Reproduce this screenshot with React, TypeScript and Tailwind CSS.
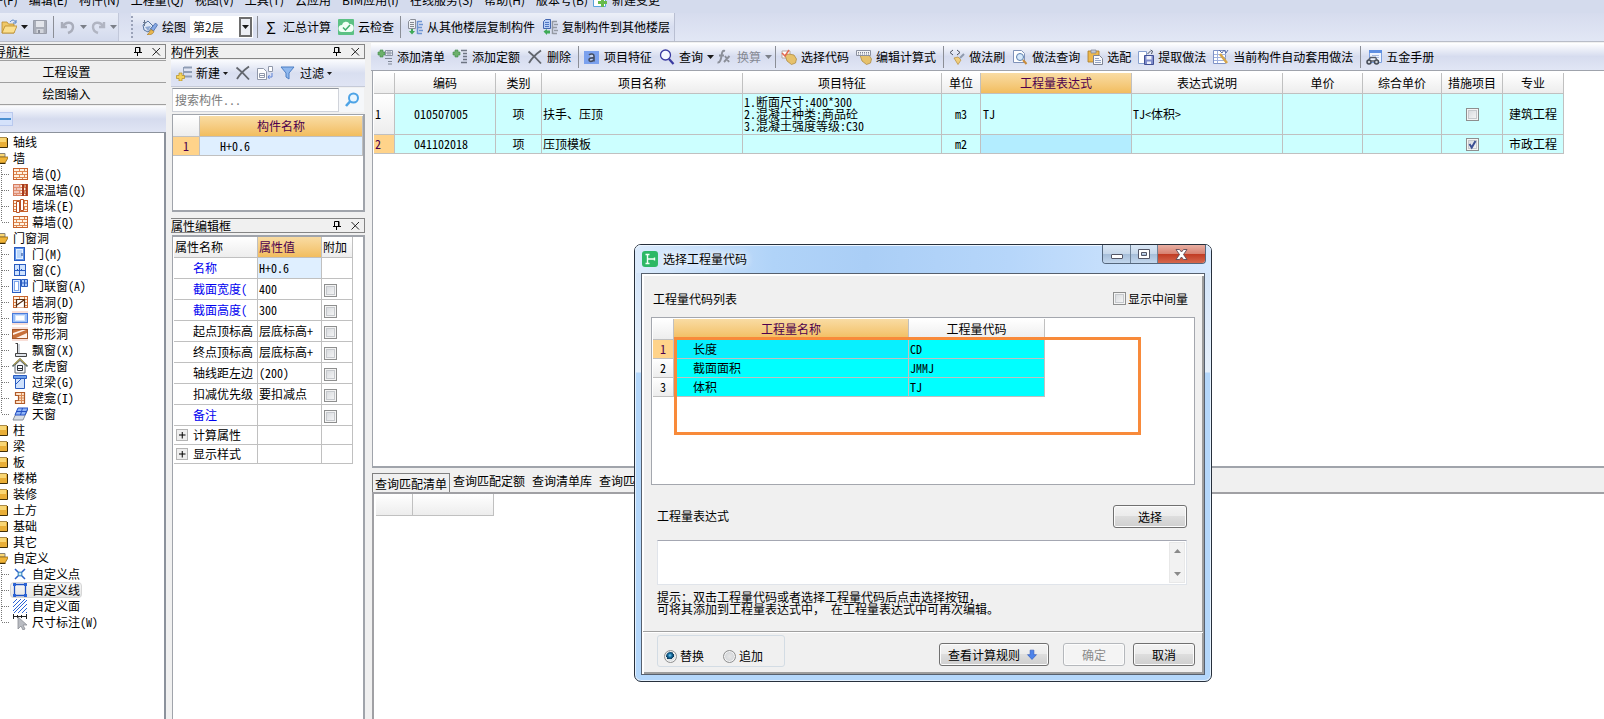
import { useState } from 'react'
import type { ReactNode } from 'react'
import clsx from 'clsx'

const bricks = (
  <>
    <rect x="1.5" y="2.5" width="14" height="11" fill="#fff3e2" stroke="#c8632c" />
    <path d="M2 5.500h13M2 8.500h13M2 11.500h13M7.500 3v2M12.500 3v2M4.500 6v2M10.500 6v2M7.500 9v2M12.500 9v2M4.500 12v1M10.500 12v1" stroke="#dd8650" fill="none" />
  </>
)

const hand = <path d="M4 6l4-1 5 1 2.500 4-1 4-4 1.500L6 12z" fill="#e6c16c" stroke="#a9853a" strokeWidth=".7" />

const plus = <path d="M3 1h3v2h2v3H6v2H3V6H1V3h2z" fill="#6cb06c" stroke="#3f8a4a" strokeWidth=".6" />

const icons: Record<string, ReactNode> = {
  open: (
    <>
      <path d="M1 3h5l1.500 2H13v9H1z" fill="#f0c868" stroke="#b98a2c" strokeWidth=".8" />
      <path d="M1 14l3-7h12l-3 7z" fill="#fbdf8e" stroke="#b98a2c" strokeWidth=".8" />
      <path d="M9 3c2-2.500 4-2.500 5.500 0M15 1v3h-3" fill="none" stroke="#4f7fc0" />
    </>
  ),
  save: (
    <>
      <path d="M1.500 1.500h13v13h-13z" fill="#a9adb8" stroke="#989ca8" />
      <path d="M4 2h8v6H4z" fill="#e3e5eb" />
      <path d="M4.500 10h7v4h-7z" fill="#d2d5dd" />
      <path d="M6 11h2v3H6z" fill="#8b8f9b" />
    </>
  ),
  undo: <path d="M2 3v5h5M3 7c3-5 10-4 10 1 0 3-2 5-5 6" fill="none" stroke="#a9adba" strokeWidth="2.400" />,
  redo: <path d="M14 3v5H9M13 7C10 2 3 3 3 8c0 3 2 5 5 6" fill="none" stroke="#b1b5c2" strokeWidth="2.400" />,
  draw: (
    <>
      <path d="M1 6l5-4 5 5-5 6-4-2z" fill="#dfe8f6" stroke="#56749f" />
      <path d="M2.500 1v6M1 3.500h3" stroke="#6b7a90" />
      <path d="M3 8l6-1-3 5z" fill="#8fa9d2" />
      <path d="M13.500 4L15.500 6l-4 6-3-2z" fill="#86a8e6" stroke="#3b5f9f" strokeWidth=".7" />
      <path d="M5 15.500c2 0 2-3 4-5l3 2c-1 3-5 4-7 3z" fill="#e9b64e" stroke="#9c7426" strokeWidth=".6" />
    </>
  ),
  cloud: (
    <>
      <rect width="16" height="16" rx="1" fill="#5cc184" />
      <path d="M4 13a3.500 3.500 0 010-7 4 4 0 017.500-1A4 4 0 0112 13z" fill="#f2fff6" />
      <path d="M5 8.500L7.500 11 12 6" fill="none" stroke="#3fae6c" strokeWidth="1.500" />
    </>
  ),
  copyFrom: (
    <>
      <path d="M1.500 2.500l2-2h5v9h-7z" fill="#eceff4" stroke="#8b8f99" />
      <path d="M3 3.500h4M3 5.500h4M3 7.500h4" stroke="#84888f" />
      <path d="M10.500 2v13M10.500 2.500H15M12 5.500h4M10.500 8.500H15M12 11.500h4M10.500 14.500H15" stroke="#6f95d2" strokeWidth="1.500" fill="none" />
      <path d="M4 10v2H2l3 3.500L8 12H6v-2z" fill="#3faa57" />
    </>
  ),
  copyTo: (
    <>
      <path d="M1.500 2.500l2-2h5v9h-7z" fill="#b9cff6" stroke="#4467b0" />
      <path d="M3 3.500h4M3 5.500h4M3 7.500h4" stroke="#4f76c4" />
      <path d="M10.500 2v13M10.500 2.500H15M12 5.500h4M10.500 8.500H15M12 11.500h4M10.500 14.500H15" stroke="#9499a3" strokeWidth="1.500" fill="none" />
      <path d="M1.500 12.500L5 10v1.500h3v3H5V16z" fill="#3faa57" />
    </>
  ),
  change: (
    <>
      <path d="M1.500 1.500h9l3 3v10h-12z" fill="#fff" stroke="#58a2dd" />
      <path d="M9 6h3v3h3v3h-3v3H9v-3H6V9h3z" fill="#67bb4b" />
    </>
  ),
  addList: (
    <>
      {plus}
      <path d="M8.500 1.500h7v5h-7z" fill="#eef1f6" stroke="#8a93a5" />
      <path d="M9 4h6M11 2v4M13 2v4" stroke="#8a93a5" />
      <path d="M8 9.500h7M11 12.500h4M11 15h4" stroke="#7f8796" />
    </>
  ),
  addQuota: (
    <>
      {plus}
      <path d="M9 1.500h6M11 4.500h4M11 7.500h4M11 10.500h4M9 13.500h6" stroke="#6d7482" strokeWidth="1.400" fill="none" />
    </>
  ),
  remove: <path d="M1.500 2.500C6 6 10 10 14 14.500M14 1.500C9 5 5 9 2 14" fill="none" stroke="#62666d" strokeWidth="1.800" />,
  feature: (
    <>
      <rect y="2" width="15" height="13" fill="#7ba1ee" />
      <path d="M5 6c1.500-1.500 5-1.500 5 1v5.500M10 9c-3.500-.5-5 .3-5 2s3 2 5 0" fill="#c4d2ef" stroke="#434c60" strokeWidth="1.600" />
    </>
  ),
  search: (
    <>
      <circle cx="6.500" cy="6" r="5" fill="#f5f8ff" stroke="#3a3aa0" strokeWidth="1.300" />
      <path d="M10 10l4.500 5" stroke="#3a3aa0" strokeWidth="2.200" />
    </>
  ),
  fx: (
    <path d="M8 2C5 1 5 4 4.500 7S3 14 .5 13.500M2 6.500h5M8 7l4 6M12.500 7L7 13" fill="none" stroke="#8b8f99" strokeWidth="1.900" />
  ),
  pickCode: (
    <>
      <path d="M1 2h8v7H1z" fill="#fff" stroke="#b7a7a0" />
      {hand}
      <path d="M1 4l3 3 4-6" fill="none" stroke="#e2684e" strokeWidth="1.500" />
    </>
  ),
  editExpr: (
    <>
      {hand}
      <path d="M.5 1.500h14v5H.5z" fill="#f2f3f6" stroke="#8b90a0" />
      <path d="M2 3.500h11M2 5h11" stroke="#7d8394" strokeDasharray="1 1" />
    </>
  ),
  brush: (
    <>
      <path d="M4 1L1 3.500 4 6M8 1l3 2.500L8 6" fill="none" stroke="#4a4f5c" />
      <path d="M15 5l-4 4" stroke="#8f9aae" strokeWidth="2" />
      <path d="M5 9l4-1 3 3-3 4.500z" fill="#f0cd7c" stroke="#b68d3a" strokeWidth=".7" />
    </>
  ),
  pageSearch: (
    <>
      <path d="M1.500 1.500h8l3 3v9h-11z" fill="#fff" stroke="#7f92b8" />
      <circle cx="8" cy="8" r="3.500" fill="#d6e9fb" stroke="#5c7fae" />
      <path d="M11 11l3.500 4" stroke="#c98c3c" strokeWidth="2" />
    </>
  ),
  paste: (
    <>
      <path d="M1 2h11v11H1z" fill="#edb84e" stroke="#a87a25" strokeWidth=".8" />
      <path d="M4 1h5v3H4z" fill="#c5c9d2" stroke="#7d8292" strokeWidth=".7" />
      <path d="M6.500 6.500h6l3 3v6h-9z" fill="#f8f9fc" stroke="#7d8292" />
      <path d="M8 9.500h4M8 11.500h6M8 13.500h6" stroke="#93a3c4" />
    </>
  ),
  extract: (
    <>
      <path d="M.5 2.500h8v12h-8z" fill="#fff" stroke="#87a0cf" />
      <path d="M6.500 6.500h9v9h-9z" fill="#7f8ccb" stroke="#414f94" />
      <path d="M8.500 7h5v3.500h-5zM9 12.500h4V15H9z" fill="#eef0fb" />
      <path d="M9.500 5l3-3M12.500 1l2 1-1 3" fill="none" stroke="#4c5568" />
    </>
  ),
  auto: (
    <>
      <path d="M.5 1.500h12v13H.5z" fill="#fff" stroke="#7e92c6" />
      <path d="M1 5.500h12M1 8.500h12M1 11.500h12M4.500 2v12" stroke="#9fb1de" />
      <path d="M7 5l7 9" stroke="#d6a548" strokeWidth="2.500" />
      <path d="M6 1l3 3 2-3 2 3 2-3" fill="none" stroke="#5a6ea8" />
    </>
  ),
  manual: (
    <>
      <path d="M3.500 1.500h12v12h-12z" fill="#eef4ff" stroke="#7ba0e0" />
      <path d="M3 1h13v3H3z" fill="#5e8fe2" />
      <path d="M6 6.500h7M6 8.500h7" stroke="#a8bce2" />
      <circle cx="3" cy="13" r="2" fill="#ccd1d8" stroke="#444a55" strokeWidth="1.500" />
      <circle cx="10.500" cy="13" r="2" fill="#ccd1d8" stroke="#444a55" strokeWidth="1.500" />
      <path d="M2.500 11l2-2.500h5l1.500 2.500M5 12h3" fill="none" stroke="#555c68" strokeWidth="1.400" />
    </>
  ),
  create: (
    <>
      <path d="M8 2.500h8M8 7h8M8 11.500h8" stroke="#8f9db5" strokeWidth="2" />
      <path d="M7.500 2v10" stroke="#8f9db5" />
      <path d="M3 8h3v2.500h2.500v3H6V16H3v-2.500H.5v-3H3z" fill="#f4d35c" stroke="#b38d22" strokeWidth=".7" />
    </>
  ),
  duplicate: (
    <>
      <path d="M.5 3.500h6l3 3v8h-9z" fill="#fff" stroke="#9098aa" />
      <path d="M2.500 8.500h5v4h-5zM2.500 10.500h5" stroke="#9098aa" />
      <path d="M11.500 1.500h4v5h-4z" fill="#fff" stroke="#9098aa" />
      <path d="M15 8v4h-4M12.500 10L11 12l1.500 2" fill="none" stroke="#5f83d6" />
    </>
  ),
  filter: <path d="M1 2h13l-5 6v6l-3-2V8z" fill="#8fb8ee" stroke="#4d7fc4" />,
  find: (
    <>
      <circle cx="9.500" cy="6" r="4.500" fill="#e8f5ff" stroke="#4da3e6" strokeWidth="2" />
      <path d="M6 9.500L2 14" stroke="#4da3e6" strokeWidth="2.600" />
    </>
  ),
  folder: (
    <>
      <path d="M1 3h14v10H1z" fill="#e9ae36" />
      <path d="M1 4h13v4H1z" fill="#f9d673" />
      <path d="M1 3.500h14" stroke="#a98a48" />
      <path d="M1 13.500h14.500V4" stroke="#3f2e08" fill="none" />
    </>
  ),
  folderOpen: (
    <>
      <path d="M1 3.500h12V7H1z" fill="#f9d673" stroke="#8a8477" />
      <path d="M1 13l3-6h12.500L13 13z" fill="#f0b437" stroke="#8c6614" strokeWidth=".8" />
      <path d="M1 13.500h12.500" stroke="#3d2c05" />
    </>
  ),
  wall: bricks,
  warmWall: (
    <>
      {bricks}
      <path d="M10 2h2v12h-2zM13.500 2h2v12h-2z" fill="#a63a22" />
      <path d="M1 2h8v12H1z" fill="#e39a94" opacity=".5" />
    </>
  ),
  pier: (
    <>
      {bricks}
      <path d="M4.500 3.500h3v11h-3zM8.500 1.500h3v11h-3z" fill="#fff" stroke="#b94f20" />
    </>
  ),
  door: (
    <>
      <rect x="2.500" y="1.500" width="10" height="13" fill="#5c93e8" stroke="#2a5cc0" />
      <rect x="4.500" y="3.500" width="6" height="9" fill="#b9d6fb" stroke="#e6f0ff" />
      <path d="M10 7v3" stroke="#163a8a" />
    </>
  ),
  window: (
    <>
      <rect x="2.500" y="2.500" width="11" height="11" fill="#cfe3ff" stroke="#2a5cc0" />
      <path d="M7.500 3v10M3 8.500h10M5.500 7v1M9.500 7v1" stroke="#2a5cc0" />
    </>
  ),
  doorWindow: (
    <>
      <rect x=".5" y="1.500" width="8" height="13" fill="#dbe9ff" stroke="#2a5cc0" />
      <rect x="2.500" y="3.500" width="4" height="9" fill="#fff" stroke="#7ea6ec" />
      <path d="M9.500 1.500h6v7h-6zM12.500 1v8M9 5h7" fill="#a9c8fa" stroke="#2a5cc0" />
    </>
  ),
  hole: (
    <>
      {bricks}
      <path d="M4.500 13.500v-8h8v8M5 11l7-5" fill="#fff" stroke="#5a2e12" strokeWidth="1.200" />
    </>
  ),
  stripWindow: (
    <>
      <rect y="1" width="16" height="14" fill="#f9dfd8" />
      <rect x=".5" y="3.500" width="15" height="9" fill="#9cc0f8" stroke="#4b7cda" />
      <rect x="3.500" y="5.500" width="9" height="5" fill="#fff" stroke="#d4e4fd" />
    </>
  ),
  stripHole: (
    <>
      <rect y="1" width="16" height="14" fill="#f9dfd8" />
      <rect x=".5" y="3.500" width="15" height="9" fill="#c8713b" stroke="#a4582a" />
      <path d="M1 7l9-3h4L1 9zM4 12l11-5v5z" fill="#fff3ea" />
    </>
  ),
  bay: (
    <>
      <path d="M5.500 1.500h-2M5.500 1v11h-2" fill="none" stroke="#444" />
      <path d="M6 2h2v9H6z" fill="#d2d6dc" />
      <path d="M3.500 11.500h11v3h-11z" fill="#dfe3e9" stroke="#444" />
    </>
  ),
  dormer: (
    <>
      <path d="M3 7v8h10V7L8 2.500z" fill="#f7f8fa" stroke="#5f6670" />
      <path d="M.5 8.500L8 1l7.500 7.500" fill="none" stroke="#5c6b62" strokeWidth="1.600" />
      <path d="M2 6.500L8 .8l6 5.700" fill="none" stroke="#e3b93c" strokeWidth=".9" />
      <path d="M5.500 7.500h5v5h-5zM5 10.500h6" fill="none" stroke="#31363d" />
    </>
  ),
  lintel: (
    <>
      <path d="M1.500 1.500h13v3h-13z" fill="#6fa0ec" stroke="#2a5cc0" />
      <path d="M3.500 4.500h9v10h-9z" fill="#cfe1fc" stroke="#2a5cc0" />
      <path d="M4 10l5-5" stroke="#2a5cc0" />
    </>
  ),
  niche: (
    <>
      <path d="M3.500 2.500h9v11h-9v-3h3v-5h-3z" fill="#ffe3c9" stroke="#b05a28" strokeWidth="1.200" />
      <path d="M7 5.500h5M7 8h5M7 10.500h5M9.500 3v10" stroke="#d88a54" />
    </>
  ),
  skylight: (
    <>
      <path d="M1 14L6 3h10l-5 11z" fill="#d8dde4" stroke="#868e99" />
      <path d="M3 9l3-7h10l-3 7z" fill="#8fb4f6" stroke="#2450c4" />
      <path d="M4.500 5.500h10M10.500 2l-2 7" stroke="#2450c4" />
    </>
  ),
  point: (
    <>
      <path d="M3 3l10 10M13 3L3 13" stroke="#2d62c8" strokeWidth="1.500" />
      <circle cx="8" cy="8" r="2" fill="#cfe6ff" stroke="#2b86b8" />
    </>
  ),
  line: (
    <>
      <path d="M2.500 2.500h11v11h-11z" fill="none" stroke="#1c51c4" strokeWidth="1.300" />
      <path d="M1 1h3v3H1zM12 1h3v3h-3zM1 12h3v3H1zM12 12h3v3h-3z" fill="#2a63d6" />
    </>
  ),
  face: <path d="M1 5l4-4M1 9l8-8M1 13l12-12M2 15L15 2M6 15l9-9M10 15l5-5M14 15l1-1" stroke="#2a63d6" fill="none" />,
  dimension: (
    <>
      <path d="M1.500 0v5M14.500 0v5M1 2.500h14M5.500 1v3M9.500 1v3" stroke="#222" />
      <path d="M6 3l9 8h-4l2 4-2 1-2-4-3 3z" fill="#b9bcc2" stroke="#8a8d94" strokeWidth=".8" />
    </>
  ),
  down: (
    <path d="M5.500 1.500h5v6h3.500L8 14 2 7.500h3.500z" fill="#4d83ea" stroke="#2854b8" strokeWidth=".8" />
  ),
}

const Icon = ({ name, className }: { name: string; className?: string }) => (
  <svg width="16" height="16" viewBox="0 0 16 16" fill="none" aria-hidden="true" className={clsx('shrink-0', className)}>
    {icons[name]}
  </svg>
)

const Caret = ({ muted, small }: { muted?: boolean; small?: boolean }) => (
  <svg
    width={small ? 5 : 7}
    height={small ? 3 : 4}
    viewBox="0 0 7 4"
    aria-hidden="true"
    className={clsx('shrink-0', muted ? 'fill-[#7b7f88]' : 'fill-[#1a1a1a]')}
  >
    <path d="M0 0h7L3.500 4z" />
  </svg>
)

const menus = ['文件(F)', '编辑(E)', '构件(N)', '工程量(Q)', '视图(V)', '工具(T)', '云应用', 'BIM应用(I)', '在线服务(S)', '帮助(H)', '版本号(B)']

const MenuBar = () => (
  <nav className="flex h-[13px] items-end overflow-hidden bg-[#d4dbed] pb-[6px] leading-[14px]">
    <div className="-ml-[21px] flex shrink-0 items-end gap-[11px] whitespace-nowrap">
      {menus.map((menu) => (
        <button key={menu} type="button">{menu}</button>
      ))}
    </div>
    <button type="button" className="ml-1 flex h-[14px] shrink-0 items-center gap-1 whitespace-nowrap">
      <Icon name="change" />
      新建变更
    </button>
  </nav>
)

const ToolbarRule = ({ className }: { className?: string }) => (
  <span className={clsx('h-[22px] w-px shrink-0 bg-[#8b8e96]', className)} />
)

const MainToolbar = () => (
  <div className="flex h-[29px] items-stretch overflow-hidden whitespace-nowrap border-b border-[#b9bdc8] bg-linear-to-b from-[#d6dcee] to-[#e2e7f5]">
    <div className="flex w-[119px] shrink-0 items-center border-r border-[#c2c8da] bg-linear-to-b from-[#e9edf7] to-[#d3daed] pl-px">
      <button type="button" aria-label="打开" className="flex items-center gap-1"><Icon name="open" /><Caret /></button>
      <button type="button" aria-label="保存" className="ml-1"><Icon name="save" /></button>
      <ToolbarRule className="ml-[5px]" />
      <button type="button" aria-label="撤销" className="ml-[6px] flex items-center gap-1"><Icon name="undo" /><Caret muted /></button>
      <button type="button" aria-label="恢复" className="ml-[3px] flex items-center gap-1"><Icon name="redo" /><Caret muted /></button>
    </div>
    <div className="ml-3 flex shrink-0 items-center border-r border-[#b9bfd2] bg-linear-to-b from-[#edf0f8] via-[#d8def0] to-[#dfe4f3] pr-1">
      <span className="mr-2 h-[22px] w-[3px] border-l-2 border-dotted border-[#9aa2b8]" />
      <button type="button" className="flex items-center gap-1"><Icon name="draw" />绘图</button>
      <div className="relative ml-1 h-[22px] w-[63px]">
        <select aria-label="楼层" className="h-full w-full appearance-none bg-white pl-[3px] leading-[22px] text-[#111]">
          <option>第2层</option>
        </select>
        <span className="pointer-events-none absolute inset-y-px right-px flex w-[13px] items-center justify-center border-2 border-[#6d6d6d] bg-[#eceef4]">
          <Caret />
        </span>
      </div>
      <ToolbarRule className="ml-1" />
      <button type="button" className="ml-2 flex items-center gap-[7px]">
        <span className="w-[10px] text-base leading-4">Σ</span>
        汇总计算
      </button>
      <button type="button" className="ml-[7px] flex items-center gap-1"><Icon name="cloud" />云检查</button>
      <ToolbarRule className="ml-[6px]" />
      <button type="button" className="ml-[6px] flex items-center gap-1"><Icon name="copyFrom" />从其他楼层复制构件</button>
      <button type="button" className="ml-[7px] flex items-center gap-1"><Icon name="copyTo" />复制构件到其他楼层</button>
    </div>
  </div>
)

const PanelTitle = ({ children, shifted }: { children: string; shifted?: boolean }) => (
  <div className="flex h-[15px] shrink-0 items-center justify-between overflow-hidden border border-l-0 border-[#858585] pr-1 leading-[13px]">
    <h2 className={clsx(shifted && '-ml-[6px]')}>{children}</h2>
    <div className="flex items-center gap-[10px]">
      <button type="button" aria-label="固定">
        <svg width="8" height="9" viewBox="0 0 8 9" fill="none" stroke="#000" aria-hidden="true">
          <path d="M1.500 5V.5H6V5M5.500 1v4M0 5.500h8M3.500 6v3" />
        </svg>
      </button>
      <button type="button" aria-label="关闭">
        <svg width="9" height="9" viewBox="0 0 9 9" stroke="#222" aria-hidden="true">
          <path d="M.5 1l7.500 7.500M8 1L.5 8.500" />
        </svg>
      </button>
    </div>
  </div>
)

type TreeNode = { label: string; icon?: string; children?: TreeNode[] }

const tree: TreeNode[] = [
  { label: '轴线' },
  {
    label: '墙',
    children: [
      { label: '墙(Q)', icon: 'wall' },
      { label: '保温墙(Q)', icon: 'warmWall' },
      { label: '墙垛(E)', icon: 'pier' },
      { label: '幕墙(Q)', icon: 'wall' },
    ],
  },
  {
    label: '门窗洞',
    children: [
      { label: '门(M)', icon: 'door' },
      { label: '窗(C)', icon: 'window' },
      { label: '门联窗(A)', icon: 'doorWindow' },
      { label: '墙洞(D)', icon: 'hole' },
      { label: '带形窗', icon: 'stripWindow' },
      { label: '带形洞', icon: 'stripHole' },
      { label: '飘窗(X)', icon: 'bay' },
      { label: '老虎窗', icon: 'dormer' },
      { label: '过梁(G)', icon: 'lintel' },
      { label: '壁龛(I)', icon: 'niche' },
      { label: '天窗', icon: 'skylight' },
    ],
  },
  { label: '柱' },
  { label: '梁' },
  { label: '板' },
  { label: '楼梯' },
  { label: '装修' },
  { label: '土方' },
  { label: '基础' },
  { label: '其它' },
  {
    label: '自定义',
    children: [
      { label: '自定义点', icon: 'point' },
      { label: '自定义线', icon: 'line' },
      { label: '自定义面', icon: 'face' },
      { label: '尺寸标注(W)', icon: 'dimension' },
    ],
  },
]

const TreeBranch = ({ last }: { last: boolean }) => (
  <svg width="10" height="16" viewBox="0 0 10 16" stroke="#777" strokeDasharray="1 1" aria-hidden="true" className="shrink-0">
    <path d={last ? 'M1.500 0v8' : 'M1.500 0v16'} />
    <path d="M2 8.500h8" />
  </svg>
)

const Navigator = () => {
  const [selected, setSelected] = useState('自定义线')

  return (
    <aside className="flex w-[166px] shrink-0 flex-col">
      <PanelTitle shifted>导航栏</PanelTitle>
      <button type="button" className="mt-px h-[23px] shrink-0 border-y border-[#a0a0a0] pr-[33px]">工程设置</button>
      <button type="button" className="h-[22px] shrink-0 border-b border-[#a0a0a0] pr-[33px]">绘图输入</button>
      <div className="mt-px flex h-[26px] shrink-0 items-center bg-linear-to-b from-[#fbfcfe] via-[#d5dbee] to-[#e0e5f4]">
        <button type="button" aria-label="收起" className="flex h-[14px] w-[13px] items-center border border-l-0 border-[#b9c9ee] bg-[#d5e2fb]">
          <span className="h-[2px] w-[11px] bg-[#4a8fd0]" />
        </button>
      </div>
      <ul className="flex-1 overflow-hidden border-t border-r-2 border-[#8c929c] bg-white pt-px leading-4">
        {tree.map((group) => (
          <li key={group.label}>
            <button type="button" className="-ml-2 flex h-4 items-center gap-[5px]">
              <Icon name={group.children ? 'folderOpen' : 'folder'} />
              {group.label}
            </button>
            {group.children && (
              <ul>
                {group.children.map((node, index) => (
                  <li key={node.label} className="flex h-4">
                    <TreeBranch last={index === group.children!.length - 1} />
                    <button
                      type="button"
                      onClick={() => setSelected(node.label)}
                      className={clsx(
                        'flex h-4 items-center gap-1 rounded-sm px-[2px]',
                        selected === node.label && 'bg-linear-to-b from-[#f8f8f8] to-[#e4e4e4] outline -outline-offset-1 outline-[#d6d6d6]',
                      )}
                    >
                      <Icon name={node.icon!} />
                      {node.label}
                    </button>
                  </li>
                ))}
              </ul>
            )}
          </li>
        ))}
      </ul>
    </aside>
  )
}

const cell = 'border-r border-b border-[#c0c0c0] p-0 font-normal overflow-hidden whitespace-nowrap'
const headCell = 'bg-linear-to-b from-white to-[#ededed]'
const activeHead = 'bg-linear-to-b from-[#f9dca3] to-[#f2bd5e] text-[#4d004d]'

const Checkbox = ({ label, id, checked }: { label?: string; id?: string; checked?: boolean }) => (
  <span className="relative inline-block h-[13px] w-[13px] align-middle">
    <input
      type="checkbox"
      id={id}
      aria-label={label}
      defaultChecked={checked}
      className="peer block h-[13px] w-[13px] appearance-none border border-[#8e8f8f] bg-linear-to-br from-[#d3d6da] to-[#fafafa] shadow-[inset_0_0_0_1px_#f4f4f4,inset_0_0_0_2px_#c6c9cd]"
    />
    <svg viewBox="0 0 13 13" fill="none" stroke="#3b4f93" strokeWidth="2" aria-hidden="true" className="pointer-events-none absolute inset-0 hidden peer-checked:block">
      <path d="M3.500 6l2.200 3.500L9.500 3" />
    </svg>
  </span>
)

type Property = { name: string; value: string; tone?: 'key'; check?: boolean }

const properties: Property[] = [
  { name: '名称', value: 'H+0.6', tone: 'key' },
  { name: '截面宽度(', value: '400', tone: 'key', check: true },
  { name: '截面高度(', value: '300', tone: 'key', check: true },
  { name: '起点顶标高', value: '层底标高+', check: true },
  { name: '终点顶标高', value: '层底标高+', check: true },
  { name: '轴线距左边', value: '(200)', check: true },
  { name: '扣减优先级', value: '要扣减点', check: true },
  { name: '备注', value: '', tone: 'key', check: true },
]

const ComponentPanel = () => (
  <div className="ml-[5px] flex w-[194px] shrink-0 flex-col">
    <PanelTitle>构件列表</PanelTitle>
    <div className="mt-px flex h-[27px] shrink-0 items-center border-b border-[#c5cad8] bg-linear-to-b from-[#fafbfe] via-[#d9dff0] to-[#dfe4f4] pl-[5px]">
      <button type="button" className="flex items-center gap-1">
        <Icon name="create" />
        <span className="flex items-center gap-[3px]">新建<Caret small /></span>
      </button>
      <button type="button" aria-label="删除" className="ml-[7px]"><Icon name="remove" /></button>
      <button type="button" aria-label="复制" className="ml-[6px]"><Icon name="duplicate" /></button>
      <button type="button" className="ml-[7px] flex items-center gap-1">
        <Icon name="filter" />
        <span className="flex items-center gap-[3px]">过滤<Caret small /></span>
      </button>
    </div>
    <div className="mt-px flex h-[24px] shrink-0 pl-px">
      <input
        type="text"
        aria-label="搜索构件"
        placeholder="搜索构件..."
        className="min-w-0 flex-1 border border-[#d0d3da] border-t-[#8f949c] bg-white pl-[2px] placeholder:text-[#7a7a7a]"
      />
      <button type="button" aria-label="搜索" className="mr-px flex w-[25px] items-center justify-center bg-[#f5f7fa]">
        <Icon name="find" />
      </button>
    </div>
    <div className="mt-[2px] ml-px h-[98px] shrink-0 overflow-hidden border border-r-2 border-b-2 border-[#a0a4ab] bg-white pt-px">
      <table className="w-full table-fixed border-separate border-spacing-0 text-center">
        <colgroup><col className="w-[27px]" /><col /></colgroup>
        <thead>
          <tr className="h-[21px]">
            <th className={clsx(cell, headCell)} />
            <th className={clsx(cell, activeHead)}>构件名称</th>
          </tr>
        </thead>
        <tbody>
          <tr className="h-[19px]">
            <td className={clsx(cell, 'bg-[#ffd38a] text-[#4d004d]')}>1</td>
            <td className={clsx(cell, 'bg-[#dfefff] pl-5 text-left')}>H+0.6</td>
          </tr>
        </tbody>
      </table>
    </div>
    <div className="mt-[6px] flex flex-1 flex-col">
      <PanelTitle>属性编辑框</PanelTitle>
      <div className="mt-[2px] ml-px flex-1 border-t-2 border-r-2 border-l border-[#a0a4ab] bg-white pl-px">
        <table className="w-[179px] table-fixed border-separate border-spacing-0 text-left leading-[14px]">
          <colgroup><col className="w-[84px]" /><col className="w-[64px]" /><col className="w-[31px]" /></colgroup>
          <thead>
            <tr className="h-[21px]">
              <th className={clsx(cell, headCell, 'pl-px')}>属性名称</th>
              <th className={clsx(cell, activeHead, 'pl-px')}>属性值</th>
              <th className={clsx(cell, headCell, 'pl-px')}>附加</th>
            </tr>
          </thead>
          <tbody>
            {properties.map((property, index) => (
              <tr key={property.name} className="h-[21px]">
                <td className={clsx(cell, 'pl-[19px]', property.tone === 'key' && 'text-[#0000f0]')}>{property.name}</td>
                <td className={clsx(cell, 'pl-px', index === 0 && 'bg-[#dfefff]')}>{property.value}</td>
                <td className={clsx(cell, 'pl-[2px] leading-[13px]')}>
                  {property.check && <Checkbox label={`附加${property.name}`} />}
                </td>
              </tr>
            ))}
            {['计算属性', '显示样式'].map((name) => (
              <tr key={name} className="h-[19px]">
                <td className={cell}>
                  <button type="button" className="flex items-center gap-[5px] pl-[2px]">
                    <svg width="12" height="12" viewBox="0 0 12 12" aria-hidden="true">
                      <rect x=".5" y=".5" width="11" height="11" fill="#eee" stroke="#b4b4b4" />
                      <path d="M3 6h6.500M6.250 3v6.500" stroke="#000" />
                    </svg>
                    {name}
                  </button>
                </td>
                <td className={cell} />
                <td className={cell} />
              </tr>
            ))}
          </tbody>
        </table>
      </div>
    </div>
  </div>
)

type Tool = { label: string; icon: string; menu?: boolean; disabled?: boolean }

const toolGroups: Tool[][] = [
  [
    { label: '添加清单', icon: 'addList' },
    { label: '添加定额', icon: 'addQuota' },
    { label: '删除', icon: 'remove' },
  ],
  [
    { label: '项目特征', icon: 'feature' },
    { label: '查询', icon: 'search', menu: true },
    { label: '换算', icon: 'fx', menu: true, disabled: true },
  ],
  [
    { label: '选择代码', icon: 'pickCode' },
    { label: '编辑计算式', icon: 'editExpr' },
  ],
  [
    { label: '做法刷', icon: 'brush' },
    { label: '做法查询', icon: 'pageSearch' },
    { label: '选配', icon: 'paste' },
    { label: '提取做法', icon: 'extract' },
    { label: '当前构件自动套用做法', icon: 'auto' },
  ],
  [{ label: '五金手册', icon: 'manual' }],
]

const columns = [
  { title: '编码', width: 'w-[101px]' },
  { title: '类别', width: 'w-[46px]' },
  { title: '项目名称', width: 'w-[201px]' },
  { title: '项目特征', width: 'w-[199px]' },
  { title: '单位', width: 'w-[39px]' },
  { title: '工程量表达式', width: 'w-[151px]' },
  { title: '表达式说明', width: 'w-[151px]' },
  { title: '单价', width: 'w-[80px]' },
  { title: '综合单价', width: 'w-[79px]' },
  { title: '措施项目', width: 'w-[61px]' },
  { title: '专业', width: 'w-[61px]' },
]

const items = [
  {
    code: '010507005',
    name: '扶手、压顶',
    features: ['1.断面尺寸:400*300', '2.混凝土种类:商品砼', '3.混凝土强度等级:C30'],
    unit: 'm3',
    expression: 'TJ',
    note: 'TJ<体积>',
    measure: false,
    major: '建筑工程',
  },
  { code: '041102018', name: '压顶模板', features: [], unit: 'm2', expression: '', note: '', measure: true, major: '市政工程' },
]

const ItemTable = () => (
  <table className="w-[1190px] table-fixed border-separate border-spacing-0 text-center leading-3">
    <colgroup>
      <col className="w-[21px]" />
      {columns.map((column) => <col key={column.title} className={column.width} />)}
    </colgroup>
    <thead>
      <tr className="h-[21px]">
        <th className={clsx(cell, headCell)} />
        {columns.map((column) => (
          <th key={column.title} className={clsx(cell, column.title === '工程量表达式' ? activeHead : headCell)}>
            {column.title}
          </th>
        ))}
      </tr>
    </thead>
    <tbody>
      {items.map((item, index) => (
        <tr key={item.code} className={clsx('bg-[#ccffff]', index === 0 ? 'h-[41px]' : 'h-[19px]')}>
          <td className={clsx(cell, 'pl-px text-left', index === 1 ? 'bg-[#ffd38a] text-[#4d004d]' : headCell)}>{index + 1}</td>
          <td className={clsx(cell, 'pr-2')}>{item.code}</td>
          <td className={cell}>项</td>
          <td className={clsx(cell, 'pl-px text-left')}>{item.name}</td>
          <td className={clsx(cell, 'pl-px text-left')}>
            {item.features.map((feature) => <div key={feature}>{feature}</div>)}
          </td>
          <td className={cell}>{item.unit}</td>
          <td className={clsx(cell, 'pl-[2px] text-left', index === 1 && 'bg-[#b3edff]')}>{item.expression}</td>
          <td className={clsx(cell, 'pl-px text-left')}>{item.note}</td>
          <td className={cell} />
          <td className={cell} />
          <td className={cell}><Checkbox label={`措施项目${index + 1}`} checked={item.measure} /></td>
          <td className={cell}>{item.major}</td>
        </tr>
      ))}
    </tbody>
  </table>
)

const Workspace = () => (
  <main className="ml-[6px] flex min-w-0 flex-1 flex-col">
    <div className="-mt-px flex h-[28px] shrink-0 items-center overflow-hidden whitespace-nowrap border-b border-[#9fa3ac] bg-linear-to-b from-white via-[#d6dcef] to-[#e1e6f5] pl-[6px] font-['Noto_Sans_CJK_SC',sans-serif]">
      {toolGroups.map((group, index) => (
        <div key={group[0].label} className="flex items-center">
          {index > 0 && <ToolbarRule className="mr-[5px]" />}
          {group.map((tool) => (
            <button
              key={tool.label}
              type="button"
              disabled={tool.disabled}
              className={clsx('flex items-center gap-1', tool.menu ? 'pr-[3px]' : 'pr-[7px]', tool.disabled && 'text-[#868a94]')}
            >
              <Icon name={tool.icon} />
              {tool.label}
              {tool.menu && <Caret muted={tool.disabled} />}
            </button>
          ))}
        </div>
      ))}
    </div>
    <section className="ml-px flex-1 overflow-hidden border-b-2 border-l border-[#a0a4ab] bg-white pt-[2px] pl-px">
      <ItemTable />
    </section>
    <section className="mt-[5px] ml-px flex h-[246px] shrink-0 flex-col">
      <div className="flex h-[19px] shrink-0 whitespace-nowrap leading-[14px]">
        <button type="button" className="border border-b-0 border-[#808080] px-[2px] pt-px">查询匹配清单</button>
        <button type="button" className="px-[3px] pb-1">查询匹配定额</button>
        <button type="button" className="px-1 pb-1">查询清单库</button>
        <button type="button" className="px-[3px] pb-1">查询匹配外部清单</button>
      </div>
      <div className="flex-1 border-t-2 border-l-2 border-[#a0a0a4] bg-white pl-[2px]">
        <table className="w-[118px] table-fixed border-separate border-spacing-0">
          <colgroup><col className="w-[37px]" /><col className="w-[81px]" /></colgroup>
          <thead>
            <tr className="h-[22px]">
              <th className={clsx(cell, headCell)} />
              <th className={clsx(cell, headCell)} />
            </tr>
          </thead>
        </table>
      </div>
    </section>
  </main>
)

const codes = [
  ['长度', 'CD'],
  ['截面面积', 'JMMJ'],
  ['体积', 'TJ'],
]

const pushButton =
  'flex h-[23px] items-center justify-center rounded-[3px] border border-[#707070] bg-[linear-gradient(#f3f3f3,#ebebeb_50%,#dddddd_50%,#cfcfcf)] shadow-[inset_0_0_0_1px_#fcfcfc] disabled:border-[#b5b8bc] disabled:bg-none disabled:bg-[#f4f4f4] disabled:text-[#8b8b8b]'

const WindowButtons = () => (
  <div className="mr-[5px] flex h-[19px] overflow-hidden rounded-b-[4px] border border-t-0 border-[#55677d]">
    <button type="button" aria-label="最小化" className="flex w-[28px] items-center justify-center border-r border-[#6e8298] bg-[linear-gradient(#dbe8f6,#c6d7ea_50%,#a5bdd8_50%,#c3d7ee)]">
      <svg width="12" height="5" viewBox="0 0 12 5" aria-hidden="true" className="mt-1"><rect x=".5" y=".5" width="11" height="4" rx=".5" fill="#fff" stroke="#535666" /></svg>
    </button>
    <button type="button" aria-label="最大化" className="flex w-[27px] items-center justify-center border-r border-[#6e8298] bg-[linear-gradient(#dbe8f6,#c6d7ea_50%,#a5bdd8_50%,#c3d7ee)]">
      <svg width="12" height="10" viewBox="0 0 12 10" aria-hidden="true"><path d="M.5.500h11v9H.5zM3.500 3.500v3h5v-3z" fill="#fff" fillRule="evenodd" stroke="#535666" /></svg>
    </button>
    <button type="button" aria-label="关闭窗口" className="flex w-[47px] items-center justify-center bg-[linear-gradient(#e9b0a4,#d7806f_50%,#c03a22_50%,#d5674d)]">
      <svg width="13" height="11" viewBox="0 0 13 11" aria-hidden="true"><path d="M1 .500h3.500l2 2.500 2-2.500H12L8.500 5.500l3.500 5H8.500l-2-2.500-2 2.500H1l3.500-5z" fill="#fff" stroke="#5b4b57" strokeWidth=".9" /></svg>
    </button>
  </div>
)

const CodeDialog = () => (
  <div
    role="dialog"
    aria-labelledby="dialog-title"
    className="absolute top-[244px] left-[634px] w-[578px] rounded-[7px] border border-[#27303c] bg-[linear-gradient(#cfe2f9,#e6f0fb_127px,#b4d7fb_128px,#b4d7fb)] shadow-[inset_0_0_0_1px_#e4f1fe]"
  >
    <div className="flex h-[28px] justify-between rounded-t-[6px] bg-[linear-gradient(90deg,#dcebfc,#b0d3f8_24%,#aacef6_40%,#b6d6fa_65%,#d6e8fe)] pl-[7px] shadow-[inset_0_1px_0_#eef6ff]">
      <div className="flex items-center gap-[5px]">
        <svg width="16" height="16" viewBox="0 0 16 16" aria-hidden="true">
          <rect width="16" height="16" rx="3" fill="#2cb865" />
          <path d="M3.500 3.500h4M5.500 3.500v9M3.500 12.500h4M5.500 8h7M12.500 6.500v3" fill="none" stroke="#f4fff8" strokeWidth="1.400" />
        </svg>
        <h1 id="dialog-title" className="font-['Noto_Sans_CJK_SC',sans-serif] [text-shadow:0_0_8px_#fff,0_0_8px_#fff]">选择工程量代码</h1>
      </div>
      <WindowButtons />
    </div>
    <div className="mx-[6px] mb-[6px] border border-[#56606e] bg-[#f0f0f0] shadow-[inset_2px_2px_0_#fff,inset_-2px_-2px_0_#9d9d9d]">
      <div className="flex h-[43px] items-center justify-between pt-[6px] pr-4 pl-[11px]">
        <h2>工程量代码列表</h2>
        <div className="flex items-center gap-[2px]">
          <Checkbox id="show-middle" />
          <label htmlFor="show-middle">显示中间量</label>
        </div>
      </div>
      <div className="relative mx-[9px] h-[168px] border border-[#a4a7ae] bg-white pt-px pl-px">
        <table className="w-[392px] table-fixed border-separate border-spacing-0 text-left leading-[14px]">
          <colgroup><col className="w-[21px]" /><col className="w-[235px]" /><col className="w-[136px]" /></colgroup>
          <thead>
            <tr className="h-[21px] text-center">
              <th className={clsx(cell, headCell)} />
              <th className={clsx(cell, activeHead)}>工程量名称</th>
              <th className={clsx(cell, headCell)}>工程量代码</th>
            </tr>
          </thead>
          <tbody>
            {codes.map(([name, code], index) => (
              <tr key={code} className="h-[19px]">
                <td className={clsx(cell, 'text-center', index === 0 ? 'bg-[#ffd38a] text-[#4d004d]' : headCell)}>{index + 1}</td>
                <td className={clsx(cell, 'pl-[19px]', index === 0 ? 'bg-[#08f0ff]' : 'bg-[#00ffff]')}>{name}</td>
                <td className={clsx(cell, 'bg-[#00ffff] pl-px')}>{code}</td>
              </tr>
            ))}
          </tbody>
        </table>
        <div className="pointer-events-none absolute top-[19px] left-[22px] h-[98px] w-[467px] border-3 border-[#f88a3a]" />
      </div>
      <div className="pr-[17px] pl-[15px]">
        <div className="flex items-center justify-between pt-5">
          <label htmlFor="expression" className="pb-[2px]">工程量表达式</label>
          <button type="button" className={clsx(pushButton, 'w-[74px]')}>选择</button>
        </div>
        <div className="mt-3 flex h-[45px] border border-[#e0e4ea] border-t-[#a4a7b2] bg-white">
          <textarea id="expression" className="min-w-0 flex-1 resize-none" />
          <div className="m-px flex w-4 flex-col items-center justify-between border border-[#e8e8e8] bg-[#f2f2f2] py-[6px]">
            <svg width="7" height="4" viewBox="0 0 7 4" aria-hidden="true" className="fill-[#8a8a8a]"><path d="M0 4h7L3.500 0z" /></svg>
            <svg width="7" height="4" viewBox="0 0 7 4" aria-hidden="true" className="fill-[#8a8a8a]"><path d="M0 0h7L3.500 4z" /></svg>
          </div>
        </div>
        <p className="mt-[6px] leading-3">
          提示：双击工程量代码或者选择工程量代码后点击选择按钮，
          <br />
          可将其添加到工程量表达式中， 在工程量表达式中可再次编辑。
        </p>
      </div>
      <div className="mx-px mt-4 flex items-start justify-between border-t border-[#a0a0a0] pt-[3px] pr-2 pb-[7px] pl-[14px] shadow-[inset_0_1px_0_#fff]">
        <fieldset className="flex h-[32px] w-[128px] items-center gap-[19px] rounded-[3px] border border-[#d3dce4] pt-[10px] pl-[6px]">
          {['替换', '追加'].map((mode, index) => (
            <label key={mode} className="flex items-center gap-[3px]">
              <input
                type="radio"
                name="mode"
                defaultChecked={index === 0}
                className="h-[13px] w-[13px] appearance-none rounded-full border border-[#8e8f8f] bg-radial from-[#e6e6e6] to-[#c9cdd2] shadow-[inset_0_0_0_1px_#f4f4f4] checked:bg-[radial-gradient(circle_at_45%_40%,#7fd4f4_0,#14689c_2px,#0c3450_4px,#dfe3e6_4px)]"
              />
              {mode}
            </label>
          ))}
        </fieldset>
        <div className="flex pt-2">
          <button type="button" className={clsx(pushButton, 'w-[110px] gap-1')}>
            查看计算规则
            <Icon name="down" className="h-3" />
          </button>
          <button type="button" disabled className={clsx(pushButton, 'ml-[14px] w-[62px]')}>确定</button>
          <button type="button" className={clsx(pushButton, 'ml-2 w-[62px]')}>取消</button>
        </div>
      </div>
    </div>
  </div>
)

const App = () => {
  return (
    <div className="relative flex h-screen flex-col overflow-hidden bg-[#f0f0f0] font-['Noto_Sans_Mono_CJK_SC','Noto_Sans_CJK_SC',sans-serif] text-xs text-black">
      <header className="font-['Noto_Sans_CJK_SC',sans-serif]">
        <MenuBar />
        <MainToolbar />
      </header>
      <div className="flex min-h-0 flex-1 pt-[2px]">
        <Navigator />
        <ComponentPanel />
        <Workspace />
      </div>
      <CodeDialog />
    </div>
  )
}

export default App
